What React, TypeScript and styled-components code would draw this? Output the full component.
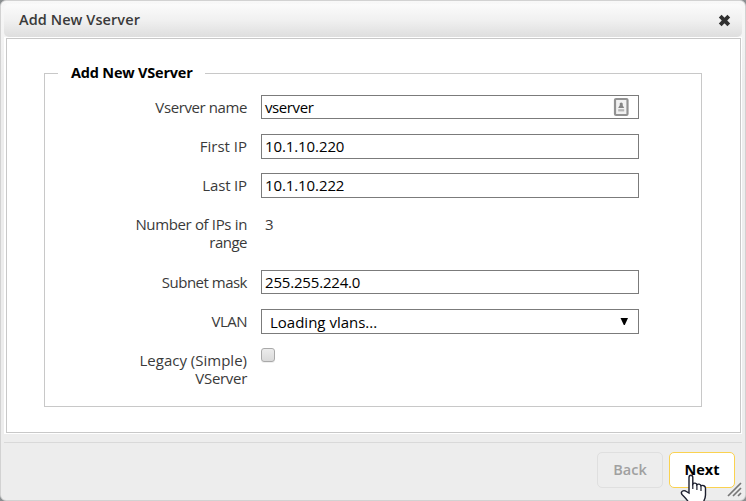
import React from "react";
import styled, { createGlobalStyle } from "styled-components";

const Global = createGlobalStyle`
  *, *::before, *::after { box-sizing: border-box; }
  body {
    margin: 0;
    overflow: hidden;
    background: #8b8f91;
    font-family: "Open Sans", "Noto Sans", sans-serif;
    font-size: 15px;
    line-height: 18px;
    color: #3a3a3a;
  }
`;

const Dialog = styled.div`
  position: relative;
  width: 746px;
  height: 501px;
  padding: 3px;
  display: flex;
  flex-direction: column;
  border: 1px solid #d2d2d2;
  border-radius: 6px;
  background: linear-gradient(#f8f8f8 0, #ededed 80px);
`;

const TitleBar = styled.header`
  height: 33px;
  flex: none;
  padding: 0 11px 0 15px;
  display: flex;
  align-items: center;
  justify-content: space-between;
  border-radius: 5px;
  background: linear-gradient(#fbfbfb, #f0f0f0 50%, #dedede);
`;

const Text = styled.span<{ $spacing?: number }>`
  display: block;
  height: 18px;
  white-space: nowrap;
  letter-spacing: ${(p) => p.$spacing ?? 0}px;
`;

const Title = styled.h1`
  margin: 0 0 2px;
  font-size: 14.5px;
  line-height: 18px;
  font-weight: 600;
  white-space: nowrap;
  letter-spacing: 0.08px;
`;

const CloseButton = styled.button`
  padding: 0;
  width: 13px;
  height: 13px;
  border: 0;
  background: none;
  display: flex;
`;

const Content = styled.main`
  flex: none;
  height: 397px;
  padding: 1px 1px 1px 2px;
  background: #fff;
`;

const Frame = styled.div`
  height: 395px;
  border: 1px solid #c8c8c8;
  padding: 25px 38px 0 37px;
`;

const Fieldset = styled.fieldset`
  margin: 0;
  padding: 13px 0 0;
  min-width: 0;
  height: 343px;
  border: 1px solid #c8c8c8;
`;

const Legend = styled.legend`
  margin-left: 13px;
  padding: 0 12px 0 13px;
  width: 147px;
  height: 18px;
  line-height: 17px;
  font-size: 14.5px;
  font-weight: 700;
  color: #000;
`;

const Row = styled.div<{ $height?: number }>`
  height: ${(p) => p.$height ?? 39}px;
  display: grid;
  grid-template-columns: 202px 378px;
  column-gap: 14px;
  align-items: start;
`;

const Label = styled.label`
  padding-top: 3px;
  display: flex;
  flex-direction: column;
  align-items: flex-end;
`;

const Field = styled.div<{ $tall?: boolean; $select?: boolean }>`
  height: ${(p) => (p.$tall ? 25 : 24)}px;
  padding: 0 ${(p) => (p.$select ? 10 : 9)}px ${(p) => (p.$tall && !p.$select ? 2 : 0)}px
    ${(p) => (p.$select ? 8 : 3)}px;
  display: flex;
  align-items: center;
  justify-content: space-between;
  border: 1px solid #7b7b7b;
  background: #fff;
  color: #000;
`;

const Value = styled.div`
  padding: 3px 0 0 4px;
`;

const Checkbox = styled.span`
  width: 14px;
  height: 14px;
  border: 1px solid #a9a9a9;
  border-radius: 3px;
  background: linear-gradient(#ececec, #dadada);
  box-shadow: 0 1px 0 #f0f0f0;
`;

const Footer = styled.footer`
  flex: 1;
  margin-top: 8px;
  padding: 9px 7px 0 0;
  display: flex;
  justify-content: flex-end;
  gap: 6px;
  border-top: 1px solid #d9d9d9;
`;

const Button = styled.button<{ $primary?: boolean }>`
  width: 66px;
  height: 36px;
  padding: 0 0 1px;
  border: 1px solid ${(p) => (p.$primary ? "#fad250" : "#dfdfdf")};
  border-radius: 5px;
  background: ${(p) => (p.$primary ? "#fff" : "#ededed")};
  color: ${(p) => (p.$primary ? "#000" : "#a0a0a0")};
  font: ${(p) => (p.$primary ? 700 : 600)} 14.5px/18px "Open Sans", sans-serif;
`;

const Overlay = styled.svg<{ $left: number; $top: number }>`
  position: absolute;
  left: ${(p) => p.$left}px;
  top: ${(p) => p.$top}px;
  pointer-events: none;
`;

function ContactIcon() {
  return (
    <svg width="16" height="20" viewBox="0 0 16 20">
      <rect x="2" y="2" width="12.500" height="16" rx="1" fill="#f1f1f1" stroke="#929292" strokeWidth="2.2" />
      <circle cx="8.200" cy="7" r="1.6" fill="#858585" />
      <path d="M5.200 11 7.200 7.500h2l2 3.500z" fill="#858585" />
      <path d="M5.200 12.200h6v2.200h-6z" fill="#b5b5b5" />
    </svg>
  );
}

export default function App() {
  return (
    <>
      <Global />
      <Dialog role="dialog">
        <TitleBar>
          <Title>Add New Vserver</Title>
          <CloseButton aria-label="Close">
            <svg width="13" height="13" viewBox="0 0 13 13">
              <path d="M2.2 2.2 10.8 10.8M10.8 2.2 2.2 10.8" stroke="#303030" strokeWidth="3.9" />
            </svg>
          </CloseButton>
        </TitleBar>
        <Content>
          <Frame>
            <Fieldset>
              <Legend><Text $spacing={-0.2}>Add New VServer</Text></Legend>
              <Row>
                <Label><Text $spacing={-0.4}>Vserver name</Text></Label>
                <Field><Text $spacing={-0.4}>vserver</Text><ContactIcon /></Field>
              </Row>
              <Row>
                <Label><Text>First IP</Text></Label>
                <Field $tall><Text $spacing={-0.1}>10.1.10.220</Text></Field>
              </Row>
              <Row>
                <Label><Text $spacing={-0.15}>Last IP</Text></Label>
                <Field $tall><Text $spacing={-0.1}>10.1.10.222</Text></Field>
              </Row>
              <Row $height={58}>
                <Label><Text $spacing={-0.35}>Number of IPs in</Text><Text $spacing={-0.5}>range</Text></Label>
                <Value>3</Value>
              </Row>
              <Row>
                <Label><Text $spacing={-0.5}>Subnet mask</Text></Label>
                <Field><Text $spacing={-0.18}>255.255.224.0</Text></Field>
              </Row>
              <Row>
                <Label><Text $spacing={-0.5}>VLAN</Text></Label>
                <Field $tall $select>
                  <Text>Loading vlans...</Text>
                  <svg width="8" height="8" viewBox="0 0 8 8"><path d="M.5 0h7.500L4.800 7h-1z" /></svg>
                </Field>
              </Row>
              <Row>
                <Label><Text>Legacy (Simple)</Text><Text $spacing={-0.3}>VServer</Text></Label>
                <Checkbox role="checkbox" aria-checked="false" />
              </Row>
            </Fieldset>
          </Frame>
        </Content>
        <Footer>
          <Button disabled><Text>Back</Text></Button>
          <Button $primary><Text>Next</Text></Button>
        </Footer>
        <Overlay $left={726} $top={480} width="16" height="16" viewBox="0 0 16 16">
          <path d="M1 15 14 2M6 15l8-8M11 15l3-3" stroke="#777" strokeWidth="1.7" />
        </Overlay>
        <Overlay $left={679} $top={472} width="28" height="32" viewBox="0 0 28 32">
          <path d="M9 20V4.500C9 1.500 12.800 1.500 12.800 4.500V11c1-1.500 3.800-1 4 .7 1.200-1.100 3.600-.6 4 1 2-.9 4.700.2 4.700 2.500V22c0 4-2 6-3 9H9.500c-1-3-4.500-6.500-7.500-9.500-2-3 1.500-4.500 3.500-3.500z" fill="#fff" stroke="#1c1f2e" strokeWidth="1.4" />
          <path d="M12.800 11v5M16.900 12v5M21 13v5" stroke="#1c1f2e" strokeWidth="1.2" />
        </Overlay>
      </Dialog>
    </>
  );
}
